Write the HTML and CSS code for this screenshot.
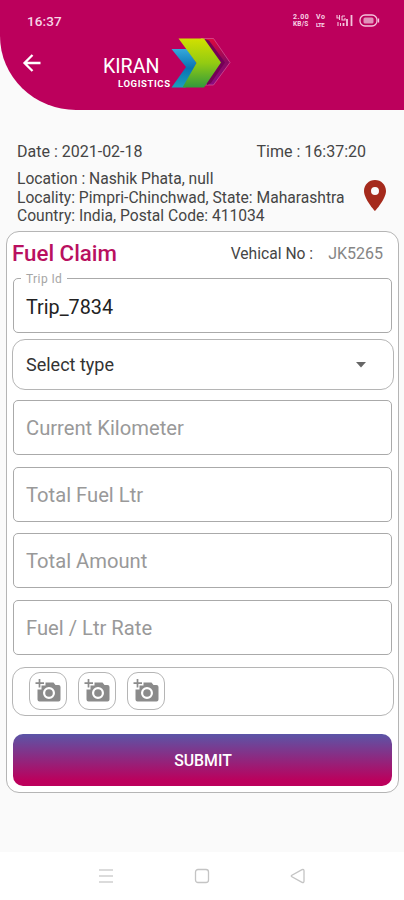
FILE: index.html
```html
<!DOCTYPE html>
<html lang="en">
<head>
<meta charset="utf-8">
<meta name="viewport" content="width=device-width, initial-scale=1">
<title>Fuel Claim</title>
<link rel="stylesheet" href="styles.css">
</head>

<body>
<div class="header">
    <div class="status">
        <span class="clock">16:37</span>
        <span class="net"><span>2.00</span><span>KB/S</span></span>
        <span class="net volte"><span>Vo</span><span>LTE</span></span>
        <svg class="signal" width="18" height="13" viewBox="0 0 18 13">
            <path d="M1 1v3h3M3.500 1v5M6 2h3M6 2v4h3V4M2 8v4M4.500 9v3" fill="none" stroke="#f3c4dc" stroke-width="1.100"/>
            <path d="M7.500 9v3M11 5v7M15.500 1v11" stroke="#f3c4dc" stroke-width="1.800"/>
        </svg>
        <svg class="battery" width="21" height="13" viewBox="0 0 21 13">
            <rect x="1" y="1" width="17" height="11" rx="5" fill="none" stroke="#f3c4dc" stroke-width="1.300"/>
            <rect x="4.500" y="3.500" width="10" height="6" rx="1.500" fill="#e191ba"/>
            <path d="M19.500 4.500v4" stroke="#f3c4dc" stroke-width="1.300"/>
        </svg>
    </div>
    <div class="toolbar">
        <svg class="back" width="20" height="20" viewBox="0 0 20 20">
            <path d="M18.500 10H2.500M10.500 2L2.500 10l8 8" fill="none" stroke="#fff" stroke-width="2.300"/>
        </svg>
        <div class="brand">
            <span class="brand-name">KIRAN</span>
            <span class="brand-sub">LOGISTICS</span>
        </div>
        <svg class="logo" width="62" height="52" viewBox="0 0 62 52">
            <defs>
                <linearGradient id="green" x1="0" y1="0" x2="0" y2="1">
                    <stop offset="0" stop-color="#d2e000"/>
                    <stop offset="0.5" stop-color="#93cb12"/>
                    <stop offset="1" stop-color="#329a3c"/>
                </linearGradient>
                <linearGradient id="blue" x1="0" y1="0" x2="0" y2="1">
                    <stop offset="0" stop-color="#35a8dc"/>
                    <stop offset="0.5" stop-color="#0873b4"/>
                    <stop offset="1" stop-color="#1ba0bc"/>
                </linearGradient>
                <linearGradient id="plum" x1="0" y1="0" x2="0" y2="1">
                    <stop offset="0" stop-color="#df0a3c"/>
                    <stop offset="0.5" stop-color="#8a0860"/>
                    <stop offset="1" stop-color="#8c0b83"/>
                </linearGradient>
            </defs>
            <path d="M31 1.500h12.500L60 25.500 43.500 48H32z" fill="url(#plum)" stroke="#d45a9b" stroke-width="0.700"/>
            <path d="M33 1.500l6 2L55 25.500 41 46l-4 2z" fill="#740057"/>
            <path d="M1.500 12H17l9.500 14-11 24.500h-14L16 30z" fill="url(#blue)"/>
            <path d="M8.500 1.500H34L51 25.500 34 50.500H12.500L26.500 26z" fill="url(#green)"/>
        </svg>
    </div>
</div>

<div class="info">
    <div class="datetime">
        <span class="date">Date : 2021-02-18</span>
        <span class="time">Time : 16:37:20</span>
    </div>
    <div class="place">
        <div class="address">
            <div>Location : Nashik Phata, null</div>
            <div>Locality: Pimpri-Chinchwad, State: Maharashtra</div>
            <div>Country: India, Postal Code: 411034</div>
        </div>
        <svg class="pin" width="22" height="31" viewBox="0 0 22 31">
            <path fill-rule="evenodd" d="M11 0C4.900 0 0 4.900 0 10.900 0 19 11 31 11 31s11-12 11-20.100C22 4.900 17.100 0 11 0zm0 7a4 4 0 1 1 0 8 4 4 0 0 1 0-8z" fill="#a52a1c"/>
        </svg>
    </div>
</div>

<div class="card">
    <div class="card-head">
        <span class="title">Fuel Claim</span>
        <span class="vehicle">Vehical No :</span>
        <span class="vehicle-no">JK5265</span>
    </div>
    <div class="field filled"><span class="label">Trip Id</span><span>Trip_7834</span></div>
    <div class="select">
        <span>Select type</span>
        <svg width="10" height="6" viewBox="0 0 10 6"><path d="M0 0h10L5 5.500z" fill="#666"/></svg>
    </div>
    <div class="field"><span>Current Kilometer</span></div>
    <div class="field"><span>Total Fuel Ltr</span></div>
    <div class="field"><span>Total Amount</span></div>
    <div class="field"><span>Fuel / Ltr Rate</span></div>
    <div class="photos">
        <span class="photo"><svg width="26" height="24" viewBox="0 0 26 24"><use href="#camera"/></svg></span>
        <span class="photo"><svg width="26" height="24" viewBox="0 0 26 24"><use href="#camera"/></svg></span>
        <span class="photo"><svg width="26" height="24" viewBox="0 0 26 24"><use href="#camera"/></svg></span>
    </div>
    <button class="submit" type="button">SUBMIT</button>
</div>

<div class="navbar">
    <svg width="16" height="16" viewBox="0 0 16 16"><path d="M1 2h14M1 8h14M1 14h14" stroke="#cfcfcf" stroke-width="1.600"/></svg>
    <svg width="16" height="16" viewBox="0 0 16 16"><rect x="1.500" y="1.500" width="13" height="13" rx="2.500" fill="none" stroke="#c4c4c4" stroke-width="1.300"/></svg>
    <svg width="16" height="16" viewBox="0 0 16 16"><path d="M1.500 8.500Q1 8 1.500 7.500L12 1.700q2-.7 2 1v10.600q0 1.700-2 1z" fill="none" stroke="#c4c4c4" stroke-width="1.300"/></svg>
</div>

<svg class="symbols" width="0" height="0">
    <symbol id="camera" viewBox="0 0 26 24">
        <path d="M4.500 0v8.500M.5 4.200H9" stroke="#8b8b8b" stroke-width="1.700"/>
        <path fill-rule="evenodd" d="M10.500 3.500h8l2 2.500h3q2 0 2 2v12.500q0 2-2 2H4.500q-2 0-2-2V10.500h4v-4h4zM14 8a6 6 0 1 0 0 12 6 6 0 0 0 0-12z" fill="#8b8b8b"/>
        <circle cx="14" cy="14" r="3.800" fill="#8b8b8b"/>
    </symbol>
</svg>
</body>
</html>
```
FILE: styles.css
```css
* {
    box-sizing: border-box;
}

body {
    margin: 0;
    height: 900px;
    display: flex;
    flex-direction: column;
    background: #fafafa;
    color: #454545;
    font-family: Roboto, sans-serif;
    font-size: 15.650px;
    white-space: nowrap;
    overflow: hidden;
}

svg {
    display: block;
    flex: none;
}

.header {
    height: 110px;
    background: #bc005c;
    border-bottom-left-radius: 76px 74px;
}

.status {
    display: flex;
    align-items: center;
    height: 37px;
    padding: 4px 24px 0 27px;
    color: #f8d5e6;
}

.clock {
    flex: 1;
    font-size: 13.500px;
    font-weight: 500;
    letter-spacing: 0.1px;
}

.net {
    display: flex;
    flex-direction: column;
    width: 18px;
    margin-right: 5px;
    font-size: 7px;
    font-weight: bold;
    line-height: 8px;
    letter-spacing: 0.6px;
}

.net span + span {
    font-size: 6.500px;
    line-height: 7px;
    letter-spacing: 0.2px;
}

.volte {
    width: 10px;
    margin-right: 10px;
}

.volte span + span {
    font-size: 6px;
    letter-spacing: -0.5px;
}

.signal {
    margin-right: 5px;
}

.toolbar {
    display: flex;
    padding-left: 22px;
}

.back {
    margin-top: 16px;
}

.brand {
    display: flex;
    flex-direction: column;
    width: 67px;
    margin: 17px 0 0 61px;
    color: #fff;
}

.brand-name {
    font-size: 19.600px;
    line-height: 25px;
}

.brand-sub {
    padding-left: 15px;
    font-size: 9.500px;
    font-weight: bold;
    line-height: 9px;
    letter-spacing: 0.6px;
}

.info {
    height: 121px;
    padding: 31px 18px 0 17px;
}

.datetime {
    display: flex;
    justify-content: space-between;
    padding-right: 20px;
    font-size: 16px;
    line-height: 21px;
}

.place {
    display: flex;
    justify-content: space-between;
    padding-top: 8px;
    line-height: 18.500px;
}

.pin {
    margin-top: 10px;
}

.card {
    width: 393px;
    height: 562px;
    margin-left: 6px;
    padding: 0 4px 0 5px;
    border: 1px solid #b5b5b5;
    border-radius: 13px;
    background: #fff;
}

.card-head {
    display: flex;
    align-items: center;
    height: 42px;
}

.title {
    flex: 1;
    color: #b9105f;
    font-size: 22.300px;
    font-weight: 500;
}

.vehicle-no {
    margin: 0 11px 0 15px;
    color: #858585;
    font-size: 16px;
}

.field {
    position: relative;
    display: flex;
    align-items: center;
    height: 55px;
    margin: 0 2px 11.500px 1px;
    padding: 1px 12px 0;
    border: 1px solid #aaa;
    border-radius: 5px;
    color: #999;
    font-size: 20.200px;
}

.filled {
    margin: 4px 2px 6px 1px;
    padding-top: 3px;
    color: #222;
    font-size: 19.800px;
}

/* sits on the outline of the field */
.label {
    position: absolute;
    top: -7px;
    left: 7px;
    padding: 0 5px;
    background: #fff;
    color: #a5a5a5;
    font-size: 12px;
    line-height: 15px;
    letter-spacing: 0.4px;
}

.select,
.photos {
    display: flex;
    align-items: center;
    border: 1px solid #b5b5b5;
    border-radius: 13px;
}

.select {
    justify-content: space-between;
    height: 51px;
    margin-bottom: 10px;
    padding: 0 27px 0 13px;
    color: #333;
    font-size: 18px;
}

.photos {
    gap: 11px;
    height: 49px;
    margin-top: 12px;
    padding-left: 16px;
}

.photo {
    display: flex;
    align-items: center;
    justify-content: center;
    width: 38px;
    height: 38px;
    border: 1px solid #b5b5b5;
    border-radius: 11px;
}

.submit {
    display: block;
    width: 379px;
    height: 52px;
    margin: 18px 1px 0;
    padding: 2px 0 0 1px;
    border: 0;
    border-radius: 10px;
    background: linear-gradient(#5b55a7, #bc005c 90%);
    color: #fff;
    font-family: Roboto, sans-serif;
    font-size: 15.800px;
    font-weight: 500;
}

.navbar {
    display: flex;
    justify-content: center;
    align-items: center;
    gap: 80px;
    height: 48px;
    margin-top: auto;
    background: #fff;
}

.symbols {
    position: absolute;
}
```
